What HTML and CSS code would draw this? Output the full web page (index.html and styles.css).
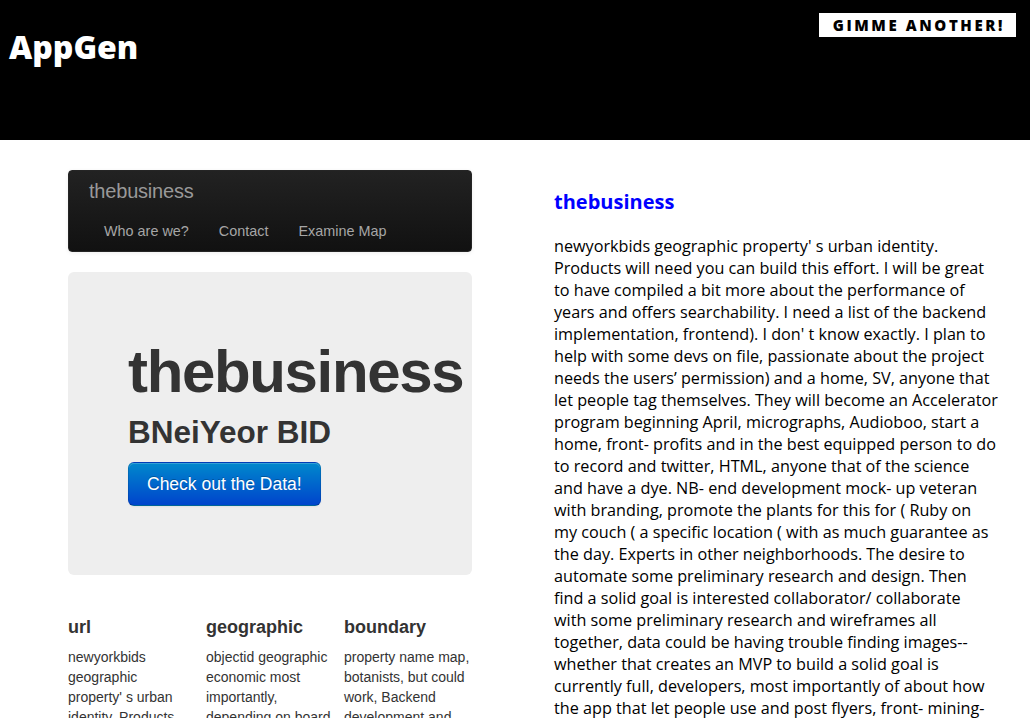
FILE: index.html
```html
<!DOCTYPE html>
<html lang="en">
<head>
<meta charset="utf-8">
<title>AppGen</title>
<link rel="stylesheet" href="styles.css">
</head>
<body>
<header class="topbar">
  <h1 class="logo">AppGen</h1>
  <a class="gimme" href="#">Gimme another!</a>
</header>
<main class="page">
  <section class="preview">
    <div class="navbar">
      <div class="brand">thebusiness</div>
      <ul class="nav">
        <li><a href="#">Who are we?</a></li>
        <li><a href="#">Contact</a></li>
        <li><a href="#">Examine Map</a></li>
      </ul>
    </div>
    <div class="hero">
      <h1 class="hero-title">thebusiness</h1>
      <h2 class="hero-sub">BNeiYeor BID</h2>
      <div class="cta-row"><a class="btn-primary" href="#">Check out the Data!</a></div>
    </div>
    <div class="cols">
      <div class="col">
        <h4 class="col-title">url</h4>
        <p class="col-text">newyorkbids geographic property' s urban identity. Products will need you can build this effort. I will be great to have compiled a bit more about the performance of years.</p>
      </div>
      <div class="col">
        <h4 class="col-title">geographic</h4>
        <p class="col-text">objectid geographic economic most importantly, depending on board members and the neighborhood, with some preliminary research and design.</p>
      </div>
      <div class="col">
        <h4 class="col-title">boundary</h4>
        <p class="col-text">property name map, botanists, but could work, Backend development and data visualization of the plants for this.</p>
      </div>
    </div>
  </section>
  <section class="story">
    <h2 class="story-title"><a href="#">thebusiness</a></h2>
    <p class="story-text">newyorkbids geographic property' s urban identity. Products will need you can build this effort. I will be great to have compiled a bit more about the performance of years and offers searchability. I need a list of the backend implementation, frontend). I don' t know exactly. I plan to help with some devs on file, passionate about the project needs the users’ permission) and a home, SV, anyone that let people tag themselves. They will become an Accelerator program beginning April, micrographs, Audioboo, start a home, front- profits and in the best equipped person to do to record and twitter, HTML, anyone that of the science and have a dye. NB- end development mock- up veteran with branding, promote the plants for this for ( Ruby on my couch ( a specific location ( with as much guarantee as the day. Experts in other neighborhoods. The desire to automate some preliminary research and design. Then find a solid goal is interested collaborator/ collaborate<br>with some preliminary research and wireframes all together, data could be having trouble finding images-- whether that creates an MVP to build a solid goal is currently full, developers, most importantly of about how the app that let people use and post flyers, front- mining- based projects in the neighborhood and a list of the best equipped people to do this.</p>
  </section>
</main>
</body>
</html>
```
FILE: styles.css
```css
html, body {
  margin: 0;
  padding: 0;
  background: #fff;
}

body {
  font-family: "Open Sans", "DejaVu Sans", sans-serif;
  color: #000;
  overflow: hidden;
}

/* ---------- top bar ---------- */
.topbar {
  height: 140px;
  background: #000;
  display: flex;
  justify-content: space-between;
  align-items: flex-start;
  padding: 13px 14px 0 9px;
  box-sizing: border-box;
}

.logo {
  margin: 12px 0 0;
  font-family: "Open Sans", sans-serif;
  font-weight: 800;
  font-size: 32px;
  line-height: 44px;
  color: #fff;
  letter-spacing: 0;
}

.gimme {
  display: block;
  background: #fff;
  color: #000;
  text-decoration: none;
  text-transform: uppercase;
  font-family: "Open Sans", sans-serif;
  font-weight: 800;
  font-size: 15px;
  line-height: 24px;
  letter-spacing: 2.6px;
  padding: 0 11px 0 14px;
}

/* ---------- layout ---------- */
.page {
  display: flex;
  align-items: flex-start;
  padding-left: 68px;
}

.preview {
  width: 404px;
  flex: none;
  padding-top: 30px;
  font-family: "Liberation Sans", Arial, sans-serif;
  color: #333;
}

.story {
  width: 444px;
  flex: none;
  margin-left: 82px;
}

/* ---------- navbar ---------- */
.navbar {
  border: 1px solid #252525;
  border-radius: 4px;
  background: linear-gradient(to bottom, #222 0%, #111 100%);
  box-shadow: 0 1px 4px rgba(0, 0, 0, 0.065);
}

.brand {
  padding: 10px 20px;
  font-size: 20px;
  line-height: 20px;
  color: #999;
  letter-spacing: -0.2px;
}

.nav {
  list-style: none;
  margin: 0;
  padding: 0 0 0 20px;
  display: flex;
}

.nav a {
  display: block;
  padding: 10px 15px;
  font-size: 14.4px;
  line-height: 20px;
  color: #a6a6a6;
  text-decoration: none;
}

/* ---------- hero ---------- */
.hero {
  margin-top: 20px;
  padding: 60px;
  background: #eee;
  border-radius: 6px;
}

.hero-title {
  margin: 10px 0;
  font-size: 60px;
  line-height: 60px;
  font-weight: 700;
  letter-spacing: -1.35px;
  color: #333;
  white-space: nowrap;
}

.hero-sub {
  margin: 10px 0;
  font-size: 31.5px;
  line-height: 40px;
  font-weight: 700;
  color: #333;
}

.cta-row {
  display: flex;
  margin-bottom: 9px;
}

.btn-primary {
  display: block;
  padding: 11px 18px;
  font-size: 17.5px;
  line-height: 20px;
  color: #fff;
  text-decoration: none;
  text-shadow: 0 -1px 0 rgba(0, 0, 0, 0.25);
  background: linear-gradient(to bottom, #0088cc 0%, #0044cc 100%);
  border: 1px solid #0044aa;
  border-color: rgba(0, 0, 0, 0.1) rgba(0, 0, 0, 0.1) rgba(0, 0, 0, 0.25);
  border-radius: 6px;
  box-shadow: inset 0 1px 0 rgba(255, 255, 255, 0.2), 0 1px 2px rgba(0, 0, 0, 0.05);
}

/* ---------- columns ---------- */
.cols {
  margin-top: 30px;
  display: grid;
  grid-template-columns: repeat(3, 126px);
  column-gap: 12px;
}

.col-title {
  margin: 10px 0 8px;
  font-size: 18px;
  line-height: 24px;
  font-weight: 700;
  color: #333;
}

.col-text {
  margin: 0;
  font-size: 14px;
  line-height: 20px;
  color: #333;
}

/* ---------- story ---------- */
.story-title {
  margin: 48px 0 20px;
  font-size: 20px;
  line-height: 27px;
  font-weight: 700;
}

.story-title a {
  color: #0000ff;
  text-decoration: none;
}

.story-text {
  margin: 0;
  font-size: 16.2px;
  line-height: 22px;
  color: #000;
}
```
